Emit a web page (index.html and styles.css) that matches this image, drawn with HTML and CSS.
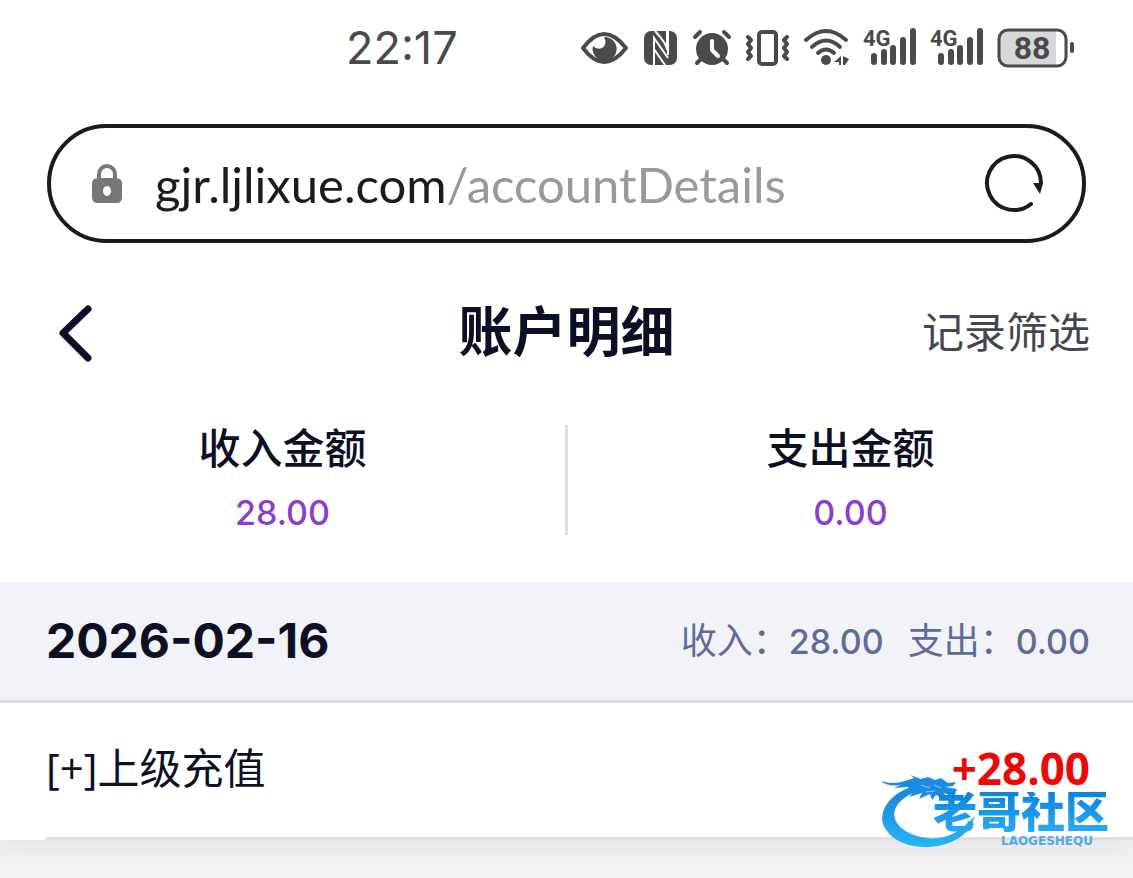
FILE: index.html
```
<!DOCTYPE html>
<html lang="zh-CN">
<head>
  <meta charset="UTF-8">
  <meta name="viewport" content="width=device-width, initial-scale=1">
  <title>账户明细</title>
  <link rel="stylesheet" href="styles.css">
</head>
<body>
<div class="top">
  <div class="status-bar">
    <time class="clock">22:17</time>
    <div class="status-icons">
      <svg class="icon-eye" width="50" height="40" viewBox="0 0 50 40">
        <path d="M3 20 Q24 -8 46 20 Q24 48 3 20Z" fill="none" stroke="#4a4a4a" stroke-width="4" stroke-linejoin="round"/>
        <path d="M24 9 A12 12 0 1 1 13 18 Q17 22 22 20 Q28 16 24 9Z" fill="#4a4a4a"/>
      </svg>
      <svg class="icon-nfc" width="36" height="40" viewBox="0 0 36 40">
        <rect x="1" y="3" width="33" height="34" rx="7" fill="#4a4a4a"/>
        <path d="M11 38V10L25 30M12 3Q24 16 24 22V3M11 21L22 37M25 3V27" fill="none" stroke="#fff" stroke-width="2"/>
      </svg>
      <svg class="icon-alarm" width="40" height="40" viewBox="0 0 40 40">
        <circle cx="20" cy="21" r="16" fill="#4a4a4a"/>
        <path d="M3 9L8 4M37 9L32 4M9 31L5 35M31 31L35 35" stroke="#4a4a4a" stroke-width="4" stroke-linecap="round"/>
        <path d="M20 13V22L26 28" fill="none" stroke="#fff" stroke-width="4" stroke-linecap="round" stroke-linejoin="round"/>
      </svg>
      <svg class="icon-vibrate" width="46" height="40" viewBox="0 0 46 40">
        <rect x="14" y="4" width="17" height="32" rx="3" fill="none" stroke="#4a4a4a" stroke-width="4"/>
        <path d="M3 9L6 12L3 16L6 20L3 24L6 28L3 31M42 9L39 12L42 16L39 20L42 24L39 28L42 31" fill="none" stroke="#4a4a4a" stroke-width="4" stroke-linecap="round" stroke-linejoin="round"/>
      </svg>
      <svg class="icon-wifi" width="46" height="40" viewBox="0 0 46 40">
        <path d="M2 12Q22 -6 42 12M8 19Q22 6 36 19M14 25Q22 18 30 25" fill="none" stroke="#4a4a4a" stroke-width="4" stroke-linecap="round"/>
        <circle cx="22" cy="32" r="5" fill="#4a4a4a"/>
        <path d="M37 28V37H35V34H30ZM39 28L45 31L41 37H39Z" fill="#4a4a4a"/>
      </svg>
      <svg class="icon-signal" width="54" height="40" viewBox="0 0 54 40">
        <text class="signal-text" x="0" y="18">4G</text>
        <path d="M11 28V34M21 24V34M30 20V34M40 12V34M50 3V34" stroke="#4a4a4a" stroke-width="6" stroke-linecap="round"/>
      </svg>
      <svg class="icon-signal" width="54" height="40" viewBox="0 0 54 40">
        <text class="signal-text" x="0" y="18">4G</text>
        <path d="M11 28V34M21 24V34M30 20V34M40 12V34M50 3V34" stroke="#4a4a4a" stroke-width="6" stroke-linecap="round"/>
      </svg>
      <svg class="icon-battery" width="78" height="40" viewBox="0 0 78 40">
        <rect x="2" y="2" width="67" height="36" rx="9" fill="#fff"/>
        <path d="M11 2H59V38H11Q2 38 2 29V11Q2 2 11 2Z" fill="#d8d8d8"/>
        <rect x="2" y="2" width="67" height="36" rx="9" fill="none" stroke="#4a4a4a" stroke-width="3"/>
        <path d="M75 16V23" stroke="#4a4a4a" stroke-width="4" stroke-linecap="round"/>
        <text class="battery-text" x="35" y="31" text-anchor="middle">88</text>
      </svg>
    </div>
  </div>

  <div class="address-bar">
    <svg class="icon-lock" width="32" height="40" viewBox="0 0 32 40">
      <path d="M8 16V10A8 8 0 0 1 24 10V16" fill="none" stroke="#777" stroke-width="4"/>
      <path d="M7 14H25Q31 14 31 20V33Q31 39 25 39H7Q1 39 1 33V20Q1 14 7 14Z" fill="#777"/>
      <ellipse cx="16" cy="27" rx="4" ry="5" fill="#fff"/>
    </svg>
    <a class="address" href="#">gjr.ljlixue.com<span class="address-path">/accountDetails</span></a>
    <button class="reload" type="button" aria-label="刷新">
      <svg width="60" height="60" viewBox="0 0 60 60">
        <path d="M47 50A27 27 0 1 1 57 29" fill="none" stroke="#1b1b1d" stroke-width="4" stroke-linecap="round"/>
        <path d="M49 29H59L56 40Z" fill="#1b1b1d"/>
      </svg>
    </button>
  </div>

  <header class="page-header">
    <button class="back" type="button" aria-label="返回">
      <svg width="36" height="58" viewBox="0 0 36 58">
        <path d="M31 5L6 29L31 54" fill="none" stroke="#0b1026" stroke-width="7" stroke-linecap="round" stroke-linejoin="round"/>
      </svg>
    </button>
    <h1 class="title">账户明细</h1>
    <button class="filter" type="button">记录筛选</button>
  </header>

  <section class="totals">
    <div class="total">
      <div class="total-label">收入金额</div>
      <div class="total-value">28.00</div>
    </div>
    <div class="total">
      <div class="total-label">支出金额</div>
      <div class="total-value">0.00</div>
    </div>
  </section>
</div>

<main class="records">
  <div class="day">
    <h2 class="day-date">2026-02-16</h2>
    <div class="day-sums">
      <span>收入：<span class="sum-value">28.00</span></span>
      <span>支出：<span class="sum-value">0.00</span></span>
    </div>
  </div>
  <div class="record">
    <span class="record-name">[+]上级充值</span>
    <span class="record-amount">+28.00</span>
    <div class="watermark">
      <svg class="watermark-dragon" width="100" height="76" viewBox="0 0 100 76">
        <defs>
          <linearGradient id="water" x1="0" y1="0" x2="0" y2="1">
            <stop offset="0" stop-color="#1b83d8"/>
            <stop offset="1" stop-color="#27b4f8"/>
          </linearGradient>
        </defs>
        <path d="M32 13C8 18 -7 42 6 57C22 80 74 78 90 52L94 42C78 60 60 68 40 63C12 56 6 38 22 25Q29 19 41 16Z" fill="url(#water)"/>
        <path d="M0 7Q12 11 24 7L33 4L29 1L40 5L47 3L54 6L60 4L67 9L75 8L72 12L64 13L76 15L73 23L63 19L66 25L55 21L51 26L49 20L38 25L41 19L28 23L34 16L20 21L28 13L13 14L20 11Q7 13 0 7Z" fill="#1d8ae3"/>
        <path d="M40 11L49 14M53 11L60 14M45 18L54 17" stroke="#8dc8f5" stroke-width="1"/>
      </svg>
      <div class="watermark-name">老哥社区</div>
      <div class="watermark-latin">LAOGESHEQU</div>
    </div>
  </div>
</main>
</body>
</html>
```
FILE: styles.css
```
* {
  box-sizing: border-box;
}

body {
  margin: 0;
  min-height: 100vh;
  background: #f2f2f4;
  color: #0b1026;
  font-family: Inter, "Noto Sans CJK SC", sans-serif;
}

button {
  padding: 0;
  border: 0;
  background: none;
  color: inherit;
  font-family: inherit;
  cursor: pointer;
}

svg {
  display: block;
  flex: none;
  overflow: visible;
}

h1, h2 {
  margin: 0;
}

.top {
  background: #fff;
}

/* phone status bar */
.status-bar {
  display: flex;
  justify-content: space-between;
  align-items: center;
  height: 124px;
  padding: 0 58px 28px 346px;
  color: #4a4a4a;
}

.clock {
  font-size: 45px;
  line-height: 56px;
}

.status-icons {
  display: flex;
  align-items: center;
  gap: 13px;
}

.signal-text {
  font: bold 22px Roboto, sans-serif;
  fill: #4a4a4a;
}

.battery-text {
  font: bold 32px Roboto, sans-serif;
  fill: #4a4a4a;
}

/* browser address bar */
.address-bar {
  display: flex;
  align-items: center;
  height: 119px;
  padding: 0 38px 0 40px;
  border: 4px solid #1b1b1d;
  border-radius: 60px;
  margin: 0 47px;
}

.address {
  flex: 1;
  margin-left: 32px;
  color: #1b1b1d;
  font-family: Lato, sans-serif;
  font-size: 49px;
  line-height: 64px;
  text-decoration: none;
}

.address-path {
  color: #999;
}

.page-header {
  display: grid;
  grid-template-columns: 1fr auto 1fr;
  align-items: center;
  padding: 50px 43px 42px;
}

.back {
  justify-self: start;
  padding: 0 14px;
}

.title {
  font-size: 54px;
  line-height: 80px;
}

.filter {
  justify-self: end;
  color: #43464f;
  font-size: 42px;
  line-height: 60px;
}

/* income and expense totals */
.totals {
  display: flex;
  padding: 10px 0 47px;
  text-align: center;
}

.total {
  flex: 1;
}

.total + .total {
  border-left: 3px solid #dcdde4;
}

.total-label {
  font-size: 42px;
  font-weight: 500;
  line-height: 48px;
}

.total-value {
  margin-top: 18px;
  color: #8a3ed0;
  font-size: 34px;
  font-weight: 500;
  line-height: 44px;
}

/* list of records */
.day {
  display: flex;
  justify-content: space-between;
  align-items: center;
  height: 121px;
  padding: 0 43px 0 46px;
  border-bottom: 3px solid #dedee0;
  background: #f2f3f9;
}

.day-date {
  font-size: 48px;
  line-height: 64px;
}

.day-sums {
  display: flex;
  gap: 24px;
  color: #5f6b98;
  font-size: 36px;
  line-height: 48px;
}

.sum-value {
  font-size: 34px;
  font-weight: 500;
}

.record {
  position: relative;
  display: flex;
  justify-content: space-between;
  align-items: center;
  height: 137px;
  padding: 0 43px 8px 46px;
  background: linear-gradient(#e0e0e4, #e0e0e4) 45px 100% / 100% 3px no-repeat #fff;
  box-shadow: 0 8px 24px rgba(20, 20, 60, 0.06);
}

.record-name {
  font-family: "Open Sans", "Noto Sans CJK SC", sans-serif;
  font-size: 42px;
  line-height: 60px;
}

.record-amount {
  color: #ec0808;
  font-family: "Open Sans", sans-serif;
  font-size: 44px;
  font-weight: 700;
  line-height: 60px;
}

/* community mark over the corner of the list */
.watermark {
  position: absolute;
  right: 20px;
  bottom: -10px;
  width: 232px;
  height: 76px;
}

.watermark-name {
  position: absolute;
  top: 18px;
  right: 4px;
  background: linear-gradient(#0c83dc, #29aaf5);
  background-clip: text;
  color: transparent;
  font-size: 44px;
  font-weight: 900;
  line-height: 40px;
}

.watermark-latin {
  position: absolute;
  top: 61px;
  right: 20px;
  color: #55a8e2;
  font-family: "DejaVu Sans", sans-serif;
  font-size: 12px;
  font-weight: 700;
  line-height: 12px;
}
```
